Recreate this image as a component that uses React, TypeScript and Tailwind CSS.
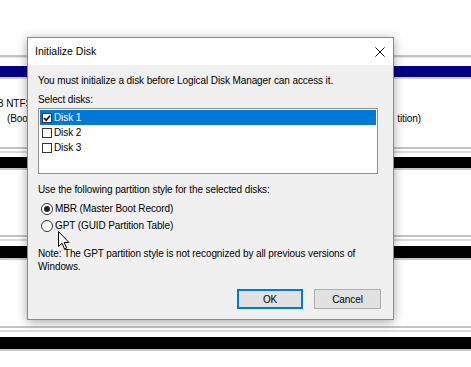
import React from "react";

function Sep({ gap }: { gap: string }) {
  return (
    <>
      <div className="h-[2px] bg-[#c4c4c4]" />
      <div className="h-[2px]" />
      <div className="h-[2px] bg-[#dcdcdc]" />
      <div className={gap} />
    </>
  );
}

function Background() {
  return (
    <div className="flex flex-col text-[10px] leading-[13px] tracking-[-0.1px] text-black">
      <div className="h-[55px]" />
      <div className="h-[2px] bg-[#c4c4c4]" />
      <div className="h-px bg-[#e4e4e4]" />
      <div className="h-[8px]" />
      <div className="h-[11px] bg-[#000080]" />
      <div className="h-[2px] bg-[#d0d0d0]" />
      <div className="h-[18px]" />
      <div className="h-[13px] whitespace-nowrap ml-[-3px]">B NTFS</div>
      <div className="h-[2px]" />
      <div className="h-[13px] flex whitespace-nowrap">
        <span className="ml-[7px]">(Boot</span>
        <span className="ml-auto mr-[50px]">tition)</span>
      </div>
      <div className="h-[22px]" />
      <Sep gap="h-[4px]" />
      <div className="h-[11px] bg-black" />
      <div className="h-[2px] bg-[#c8c8c8]" />
      <div className="h-[65px]" />
      <Sep gap="h-[5px]" />
      <div className="h-[12px] bg-black" />
      <div className="h-[2px] bg-[#c8c8c8]" />
      <div className="h-[66px]" />
      <Sep gap="h-[5px]" />
      <div className="h-[12px] bg-black" />
      <div className="h-[2px] bg-[#c8c8c8]" />
    </div>
  );
}

function CheckBox({ checked }: { checked?: boolean }) {
  return (
    <svg width="10" height="10" viewBox="0 0 10 10" className="shrink-0">
      <rect x="0.5" y="0.5" width="9" height="9" fill="#fff" stroke="#333" />
      {checked && (
        <path d="M2 5 L4.2 7.2 L8 2.8" fill="none" stroke="#000" strokeWidth="1.7" />
      )}
    </svg>
  );
}

function Radio({ checked }: { checked?: boolean }) {
  return (
    <svg width="12" height="12" viewBox="0 0 12 12" className="shrink-0">
      <circle cx="6" cy="6" r="5.5" fill="#fff" stroke="#333" />
      {checked && <circle cx="6" cy="6" r="3" fill="#222" />}
    </svg>
  );
}

function Dialog() {
  return (
    <div className="absolute left-[27px] top-[37px] w-[367px] h-[283px] border border-[#8a8a8a] bg-[#f0f0f0] shadow-[0_2px_10px_rgba(0,0,0,0.35)] flex flex-col text-black">
      <div className="h-[27px] bg-white flex items-center justify-between pl-[7px] pr-[8px]">
        <span className="text-[10.5px] leading-[13px]">Initialize Disk</span>
        <svg width="10" height="10" viewBox="0 0 10 10">
          <path d="M0.5 0.5 L9.5 9.5 M9.5 0.5 L0.5 9.5" stroke="#111" strokeWidth="1" />
        </svg>
      </div>
      <div className="flex flex-col px-[10px] pt-[9px] text-[10px] leading-[13px] tracking-[-0.1px]">
        <div className="h-[13px] whitespace-nowrap">
          You must initialize a disk before Logical Disk Manager can access it.
        </div>
        <div className="h-[13px] mt-[6px]">Select disks:</div>
        <div className="mt-[2px] w-[340px] h-[66px] border border-[#8f8f8f] bg-white p-px">
          <div className="h-[15px] bg-[#0078d7] text-white flex items-center gap-[2px] pl-[2px]">
            <CheckBox checked />
            <span>Disk 1</span>
          </div>
          <div className="h-[15px] flex items-center gap-[2px] pl-[2px]">
            <CheckBox />
            <span>Disk 2</span>
          </div>
          <div className="h-[15px] flex items-center gap-[2px] pl-[2px]">
            <CheckBox />
            <span>Disk 3</span>
          </div>
        </div>
        <div className="h-[13px] mt-[9px] whitespace-nowrap">
          Use the following partition style for the selected disks:
        </div>
        <div className="mt-[4px] h-[17px] flex items-center gap-[2px] pl-[3px]">
          <Radio checked />
          <span>MBR (Master Boot Record)</span>
        </div>
        <div className="h-[17px] flex items-center gap-[2px] pl-[3px]">
          <Radio />
          <span>GPT (GUID Partition Table)</span>
        </div>
        <div className="mt-[13px] whitespace-nowrap">
          <div>Note: The GPT partition style is not recognized by all previous versions of</div>
          <div>Windows.</div>
        </div>
        <div className="mt-[16px] flex justify-end gap-[11px] mr-[2px]">
          <button className="w-[66px] h-[20px] border-2 border-[#0078d7] bg-[#e1e1e1] flex items-center justify-center">
            OK
          </button>
          <button className="w-[67px] h-[20px] border border-[#adadad] bg-[#e1e1e1] flex items-center justify-center">
            Cancel
          </button>
        </div>
      </div>
    </div>
  );
}

function Cursor() {
  return (
    <svg
      className="absolute left-[58px] top-[231px]"
      width="12"
      height="19"
      viewBox="0 0 12 19"
    >
      <path
        d="M0.5 0.5 L0.5 15.5 L4 12.2 L6.5 18 L8.6 17.1 L6.2 11.5 L11 11.5 Z"
        fill="#fff"
        stroke="#000"
        strokeWidth="1"
        strokeLinejoin="round"
      />
    </svg>
  );
}

export default function App() {
  return (
    <div
      className="relative w-[471px] h-[367px] overflow-hidden bg-white"
      style={{ fontFamily: '"Liberation Sans", Arial, sans-serif' }}
    >
      <Background />
      <Dialog />
      <Cursor />
    </div>
  );
}
